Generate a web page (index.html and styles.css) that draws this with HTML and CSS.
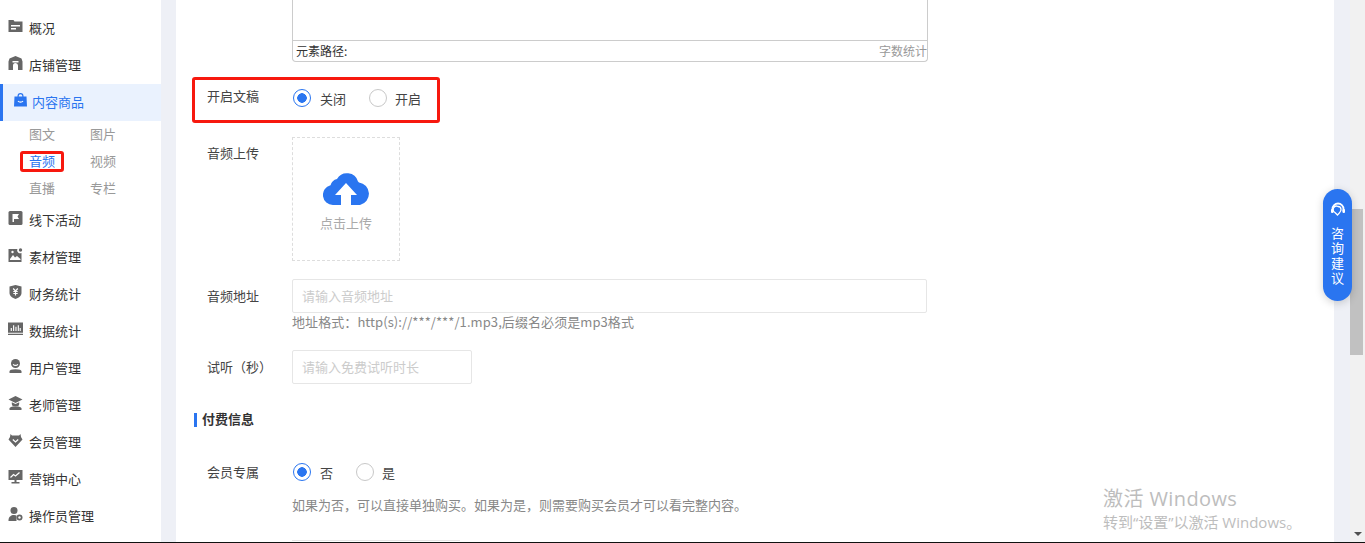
FILE: index.html
```html
<!DOCTYPE html>
<html lang="zh-CN">
<head>
<meta charset="utf-8">
<title>音频</title>
<link rel="stylesheet" href="styles.css">
</head>
<body>
<div class="app">
  <nav class="sidebar">
    <a class="nav-item"><svg class="ico" viewBox="0 0 14 14"><path d="M0 1h5l1 1.500h8V13H0z"/><path class="cut" d="M2.500 6h9v1.500h-9zM2.500 9h5v1.500h-5z"/></svg>概况</a>
    <a class="nav-item"><svg class="ico" viewBox="0 0 14 14"><path d="M7 0l6 2.500 1 3V14H9.500V9.500a2.500 2.500 0 0 0-5 0V14H0V5.500l1-3z"/><path class="cut" d="M4 5h6v1.500H4z"/></svg>店铺管理</a>
    <a class="nav-item is-active"><svg class="ico" viewBox="0 0 14 14"><path d="M1 3.500h3V3a3 3 0 0 1 6 0v.5h3l.5 10H.5z"/><path class="cut-blue" d="M5.200 3.500h3.600V3a1.800 1.800 0 0 0-3.600 0z"/><path class="stroke-white" d="M4.500 8a3 2.500 0 0 0 5 0"/></svg>内容商品</a>
    <div class="sub-grid">
      <a class="sub-item">图文</a><a class="sub-item">图片</a>
      <a class="sub-item is-current">音频</a><a class="sub-item">视频</a>
      <a class="sub-item">直播</a><a class="sub-item">专栏</a>
    </div>
    <a class="nav-item"><svg class="ico" viewBox="0 0 14 14"><rect width="14" height="14" rx="1.500"/><path class="cut" d="M4 3h6.500L9 5.500l1.500 2.500H5.500v3H4z"/></svg>线下活动</a>
    <a class="nav-item"><svg class="ico" viewBox="0 0 14 14"><path d="M0 1h9a3 3 0 0 0 4 4v9H0z"/><circle cx="12" cy="2" r="1.700"/><path class="cut" d="M1.500 11l3-4 2 2.500 2-1.500 3.500 3v1H1.500z"/><circle class="cut" cx="4" cy="4" r="1.200"/></svg>素材管理</a>
    <a class="nav-item"><svg class="ico" viewBox="0 0 14 14"><path d="M7 0l6 1.500V8c0 3-3 5-6 6-3-1-6-3-6-6V1.500z"/><path class="stroke-white" d="M4.700 3.500L7 6l2.300-2.500M7 6v4.500M4.800 6.500h4.400M4.800 8.500h4.400"/></svg>财务统计</a>
    <a class="nav-item"><svg class="ico" viewBox="0 0 16 14"><path d="M0 0h16v11H0zM0 12h16v1.500H0z"/><path class="stroke-white" d="M3.500 9V6M6 9V3M8.500 9V4.500M11 9V3M13 9V6"/></svg>数据统计</a>
    <a class="nav-item"><svg class="ico" viewBox="0 0 14 14"><circle cx="7" cy="4.500" r="4.500"/><path d="M1 12.500C1 11 3 10.300 7 10.300s6 .7 6 2.200V14H1z"/><path class="stroke-white" d="M4.700 5.200a2.500 2 0 0 0 4.600 0"/></svg>用户管理</a>
    <a class="nav-item"><svg class="ico" viewBox="0 0 14 14"><path d="M7 0l7 3.500L7 7 0 3.500z"/><path d="M3.300 6.300L7 8l3.700-1.700V8a3.700 2.500 0 0 1-7.400 0z"/><path d="M1 12.500C1 11 3 10.400 7 10.400s6 .6 6 2.100V14H1z"/></svg>老师管理</a>
    <a class="nav-item"><svg class="ico" viewBox="0 0 14 14"><path d="M2 1l1.500 1.500h7L12 1l.5 3L14 6.500 7 14 0 6.500 1.500 4z"/><path class="stroke-white" d="M4.300 6.500L7 9l2.700-2.500"/></svg>会员管理</a>
    <a class="nav-item"><svg class="ico" viewBox="0 0 14 14"><path d="M0 0h14v10H8v2h3v1.500H3V12h3v-2H0z"/><path class="stroke-white" d="M2 7.500l3-3 2 1.500 4-3.500"/></svg>营销中心</a>
    <a class="nav-item"><svg class="ico" viewBox="0 0 14 14"><circle cx="5.500" cy="3.500" r="3.500"/><path d="M0 13c0-3 2.500-5 5.500-5 1 0 2 .2 2.500.6V14H0z"/><circle cx="11" cy="10.500" r="3"/><circle class="cut" cx="11" cy="10.500" r="1.200"/></svg>操作员管理</a>
  </nav>
  <div class="gutter"></div>
  <main class="content">
    <div class="editor">
      <div class="editor-body"></div>
      <div class="editor-foot"><span class="path">元素路径:</span><span class="count">字数统计</span></div>
    </div>
    <div class="row row-switch">
      <span class="label">开启文稿</span>
      <span class="radio is-on"></span><span class="radio-text">关闭</span>
      <span class="radio"></span><span class="radio-text">开启</span>
    </div>
    <div class="row row-upload">
      <span class="label">音频上传</span>
      <div class="upload">
        <svg class="cloud" viewBox="0 0 46 33"><path d="M10 33a10 10 0 0 1-2.500-19.700A9 9 0 0 1 14 7 11.500 11.500 0 0 1 35 9.500a8.500 8.500 0 0 1 1 .9A11.500 11.500 0 0 1 37 33H28V23h6L23 11 12 23h6v10z"/></svg>
        <span>点击上传</span>
      </div>
    </div>
    <div class="row row-input">
      <span class="label">音频地址</span>
      <div class="input input-wide">请输入音频地址</div>
    </div>
    <p class="hint hint-url">地址格式：http(s)://***/***/1.mp3,后缀名必须是mp3格式</p>
    <div class="row row-trial">
      <span class="label">试听（秒）</span>
      <div class="input input-short">请输入免费试听时长</div>
    </div>
    <h3 class="section">付费信息</h3>
    <div class="row row-member">
      <span class="label">会员专属</span>
      <span class="radio is-on"></span><span class="radio-text">否</span>
      <span class="radio"></span><span class="radio-text">是</span>
    </div>
    <p class="hint hint-member">如果为否，可以直接单独购买。如果为是，则需要购买会员才可以看完整内容。</p>
    <div class="next-input"></div>
  </main>
  <div class="gutter-right"></div>
  <div class="scrollbar">
    <div class="thumb-space"><div class="thumb"></div></div>
    <div class="arrow"></div>
  </div>
</div>
<div class="page-edge"></div>
<aside class="consult">
  <svg class="headset" viewBox="0 0 16 16"><path d="M2.500 9.500V7a5.500 5.500 0 0 1 11 0v2.500" fill="none" stroke="#fff" stroke-width="1.800"/><path d="M8 4.500a3 3 0 0 1 3 3c0 2-1.500 3.500-3.500 5.500L5 10.500a3 3 0 0 1 3-6z" fill="none" stroke="#fff" stroke-width="1.300"/><rect x="1" y="7" width="2.500" height="4" rx="1" fill="#fff"/><rect x="12.500" y="7" width="2.500" height="4" rx="1" fill="#fff"/></svg>
  <span>咨询建议</span>
</aside>
<div class="watermark">
  <div class="wm-title">激活 Windows</div>
  <div class="wm-sub">转到“设置”以激活 Windows。</div>
</div>
</body>
</html>
```
FILE: styles.css
```css
*, *::before, *::after { box-sizing: border-box; }
html, body { margin: 0; height: 543px; overflow: hidden; }
body {
  font-family: "Noto Sans CJK SC", "Liberation Sans", sans-serif;
  font-size: 13px;
  color: #333;
  background: #fff;
}
.app { display: flex; height: 542px; overflow: hidden; }
.page-edge { height: 1px; background: #111; }

.sidebar { flex: 0 0 161px; padding-top: 10px; background: #fff; }
.nav-item {
  display: flex; align-items: center; gap: 6px;
  height: 37px; padding-left: 8px; padding-bottom: 1px;
  color: #333; line-height: 34px;
}
.ico { width: 15px; height: 14px; margin-top: -4px; flex: none; fill: #666; }
.ico path, .ico circle, .ico rect { fill: #666; }
.ico .cut, .ico circle.cut { fill: #fff; }
.ico .stroke-white { fill: none; stroke: #fff; stroke-width: 1.200; }
.nav-item.is-active {
  padding-left: 10px; gap: 4px;
  background: #eaf2fe; border-left: 3px solid #2a75f0; color: #2a75f0;
}
.is-active .ico path { fill: #2a75f0; }
.is-active .ico .cut-blue { fill: #eaf2fe; }
.is-active .ico .stroke-white { fill: none; }

.sub-grid {
  display: grid; grid-template-columns: 61px 61px; grid-auto-rows: 27px;
  padding-left: 29px; height: 81px;
}
.sub-item { color: #999; line-height: 25px; position: relative; }
.sub-item.is-current { color: #2a75f0; }
.sub-item.is-current::after {
  content: ""; position: absolute; left: -9px; top: 3px;
  width: 44px; height: 21px; border: 3px solid #f7180e; border-radius: 3px;
}

.gutter { flex: 0 0 15px; background: #eef0f6; }
.gutter-right { flex: 0 0 16px; background: #eef0f6; }
.content { flex: 0 0 1158px; background: #fff; overflow: hidden; }

.editor {
  width: 636px; height: 62px; margin-left: 116px;
  border: 1px solid #ccc; border-top: 0; border-radius: 0 0 4px 4px;
  display: flex; flex-direction: column;
}
.editor-body { height: 41px; flex: none; border-bottom: 1px solid #ccc; }
.editor-foot {
  flex: 1; display: flex; justify-content: space-between;
  padding-left: 3px; font-size: 12px; line-height: 20px;
}
.count { color: #999; }

.row { display: flex; align-items: center; }
.label { width: 85px; flex: none; color: #444; position: relative; top: -1px; }
.row-switch {
  width: 248px; height: 46px; margin: 15px 0 0 16px; padding: 0 0 5px 12px;
  border: 3px solid #f7180e; border-radius: 3px;
}
.row-switch .label { top: -2px; }
.radio {
  width: 18px; height: 18px; flex: none; border-radius: 50%;
  border: 1.500px solid #c8c8c8; background: #fff; margin-left: 1px;
}
.radio.is-on {
  border-color: #2a75f0;
  background: radial-gradient(circle, #2a75f0 0 4.500px, #fff 5px);
}
.radio-text {
  margin: 0 22px 0 9px; color: #444; white-space: nowrap;
  position: relative; top: 1px;
}
.radio:not(.is-on) + .radio-text { margin-left: 8px; }

.row-upload { align-items: flex-start; margin: 14px 0 0 31px; }
.row-upload .label { line-height: 32px; top: 0; }
.upload {
  width: 108px; height: 124px;
  border: 1px dashed #ddd; color: #aaa;
  display: flex; flex-direction: column; align-items: center; padding-top: 34px;
}
.cloud { width: 46px; height: 33px; fill: #2a75f0; margin-bottom: 8px; }

.row-input { margin: 18px 0 0 31px; }
.input {
  height: 34px; border: 1px solid #e6e6e6; border-radius: 2px;
  padding-left: 9px; line-height: 31px; color: #ccc;
}
.input-wide { width: 635px; }
.input-short { width: 180px; }
.hint { margin: 0 0 0 116px; color: #888; }
.hint-url { height: 20px; line-height: 18px; letter-spacing: .08px; }
.row-trial { margin: 17px 0 0 31px; }

.section {
  margin: 29px 0 0 18px; height: 14px; padding-left: 5px;
  border-left: 3px solid #2a75f0;
  font-size: 13px; line-height: 12px; font-weight: 700; color: #333;
}
.row-member { margin: 36px 0 0 31px; height: 18px; }
.row-member .radio-text { top: 0; }
.hint-member { height: 20px; line-height: 20px; margin-top: 14px; }
.next-input { width: 168px; height: 1px; margin: 25px 0 0 116px; background: #e6e6e6; }

.scrollbar { flex: 1; display: flex; flex-direction: column; background: #f1f1f1; }
.thumb-space { flex: 1; padding-top: 209px; }
.thumb { width: 13px; height: 146px; background: #c1c1c1; }
.arrow {
  width: 0; height: 0; margin: 0 0 6px 4px;
  border: 4px solid transparent; border-top: 4px solid #505050; border-bottom: 0;
}

.consult {
  position: absolute; left: 1323px; top: 189px; width: 29px; height: 112px;
  border-radius: 14.500px; background: #2a75f0; color: #fff;
  box-shadow: 0 2px 8px rgba(0,0,0,.18);
  display: flex; flex-direction: column; align-items: center; padding-top: 13px;
}
.headset { width: 16px; height: 16px; }
.consult span { width: 13px; margin-top: 7px; line-height: 15px; text-align: center; font-size: 13px; }

.watermark {
  position: absolute; left: 1103px; top: 485px; color: #bdbdbd;
  font-family: "Open Sans", "Noto Sans CJK SC", sans-serif;
}
.wm-title { font-size: 20px; line-height: 27px; letter-spacing: .4px; }
.wm-sub { font-size: 15px; line-height: 20px; }
```
